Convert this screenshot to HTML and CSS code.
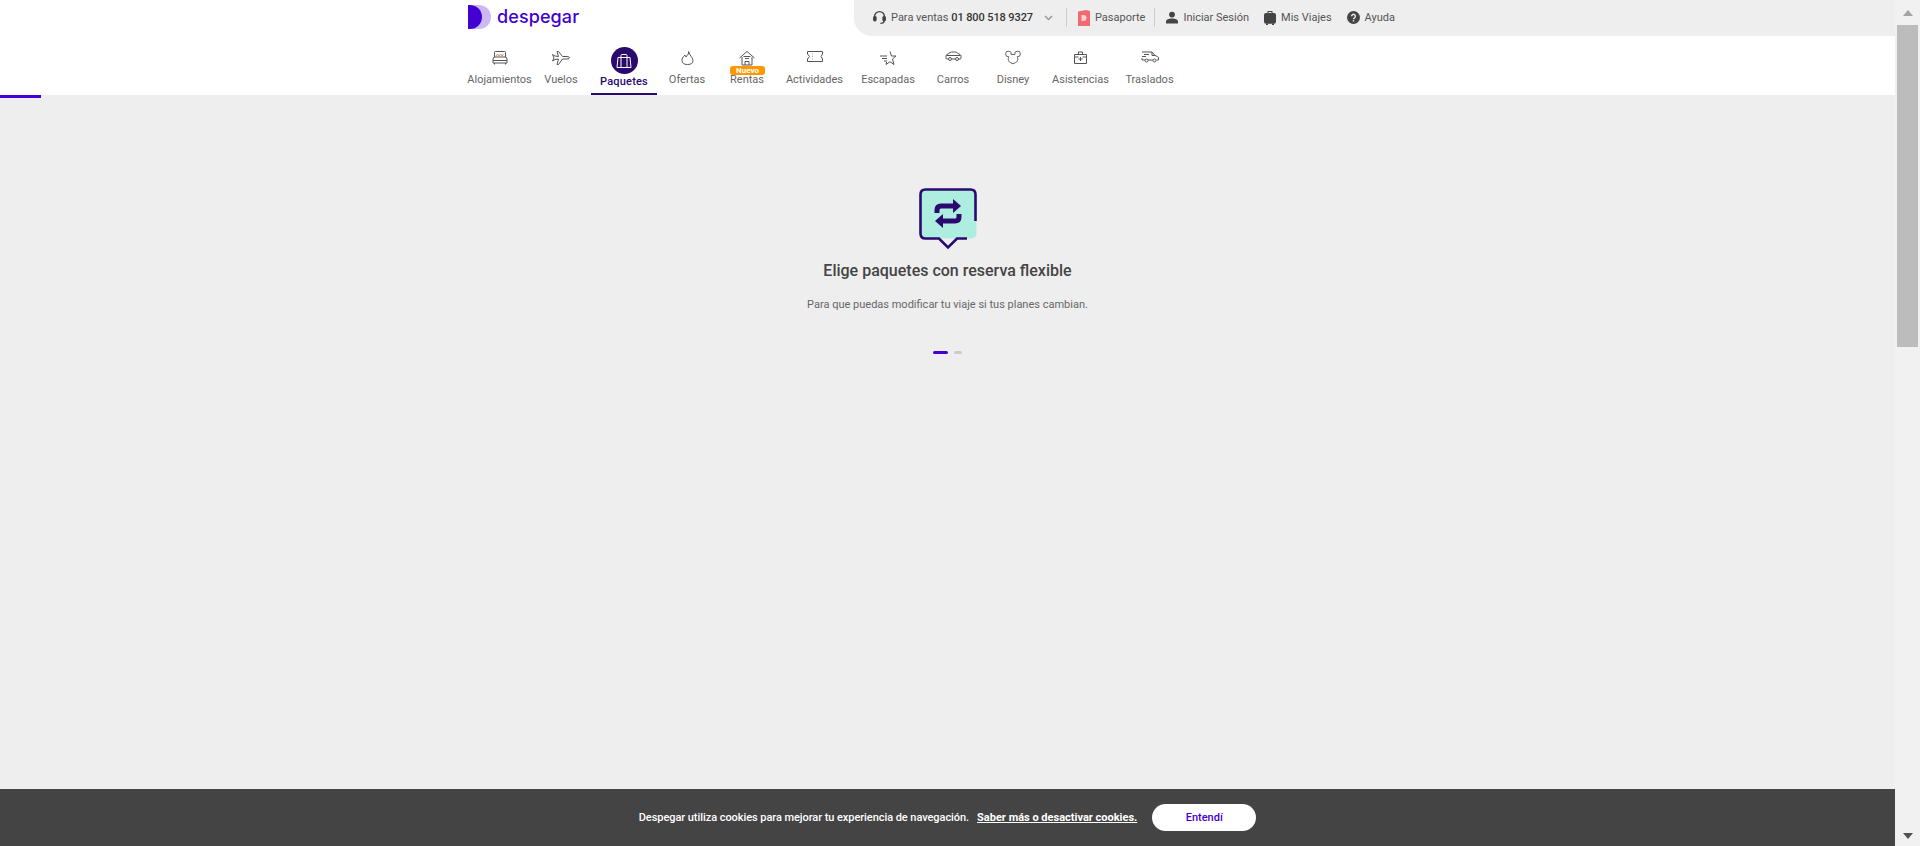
FILE: index.html
```html
<!DOCTYPE html>
<html lang="es">
<head>
    <meta charset="UTF-8">
    <meta name="viewport" content="width=device-width, initial-scale=1.0">
    <title>Despegar | Paquetes</title>
    <link rel="stylesheet" href="styles.css">
</head>
<body>
<div class="page">
    <div class="app">
        <header class="header">
            <div class="header-top">
                <a class="logo" href="#">
                    <svg class="logo-mark" width="23" height="24" viewBox="0 0 23 24">
                        <path d="M0 0h11a12 12 0 0 1 0 24H0z" fill="#cdb8f6"/>
                        <path d="M0 0h2a12 12 0 0 1 0 24H0z" fill="#4300d2"/>
                    </svg>
                    <span class="logo-text">despegar</span>
                </a>
                <nav class="top-links">
                    <a class="top-link" href="#">
                        <svg width="13" height="15" viewBox="0 0 14 15" fill="none" stroke="#444" stroke-width="1.5"><path d="M1.7 8V6.500a5.300 5.300 0 0 1 10.600 0V8"/><rect x="0.8" y="6.500" width="2.400" height="4.500" rx="1" fill="#444"/><rect x="10.800" y="6.500" width="2.400" height="4.500" rx="1" fill="#444"/><path d="M12 11c0 2-1.500 2.800-4 2.800"/></svg>
                        <span>Para ventas <b>01 800 518 9327</b></span>
                    </a>
                    <svg class="chevron" width="9" height="6" viewBox="0 0 9 6" fill="none" stroke="#999" stroke-width="1.500"><path d="M1 1l3.500 3.500L8 1"/></svg>
                    <span class="top-sep sep-first"></span>
                    <a class="top-link" href="#">
                        <svg width="12" height="16" viewBox="0 0 12 16"><path d="M0 1.500L8 0l4 1v15H0z" fill="#f4686f"/><path d="M3.500 5h2a3 3 0 0 1 0 6h-2z" fill="#fbd3d5"/></svg>
                        <span>Pasaporte</span>
                    </a>
                    <span class="top-sep"></span>
                    <a class="top-link" href="#">
                        <svg width="12" height="13" viewBox="0 0 13 13" fill="#444"><circle cx="6.500" cy="3.300" r="3.100"/><path d="M0 13v-2.200C0 8.800 3 7.600 6.500 7.600s6.500 1.200 6.500 3.200V13z"/></svg>
                        <span>Iniciar Sesión</span>
                    </a>
                    <a class="top-link" href="#">
                        <svg width="12" height="15" viewBox="0 0 12 15" fill="#444"><path d="M3.500 3V1h5v2h-1V2h-3v1z"/><rect x="0" y="3" width="12" height="10.800" rx="2"/><rect x="2" y="13.500" width="2" height="1.500"/><rect x="8" y="13.500" width="2" height="1.500"/></svg>
                        <span>Mis Viajes</span>
                    </a>
                    <a class="top-link" href="#">
                        <svg width="13" height="13" viewBox="0 0 13 13"><circle cx="6.500" cy="6.500" r="6.500" fill="#444"/><path d="M4.600 5.200a1.900 1.900 0 1 1 2.900 1.600c-.7.400-1 .8-1 1.500" fill="none" stroke="#eee" stroke-width="1.400"/><rect x="5.800" y="9.200" width="1.400" height="1.400" fill="#eee"/></svg>
                        <span>Ayuda</span>
                    </a>
                </nav>
            </div>
            <nav class="products">
                <a class="product" href="#">
                    <svg class="ico" width="16" height="14" viewBox="0 0 16 14"><path d="M2.500 6V1.500q0-1 1-1h9q1 0 1 1V6M1 12V8q0-2 2-2h10q2 0 2 2v4zM1 9.500h14M2.500 12v1.500M13.500 12v1.500"/><path d="M4 5l1.500-2L7 5l1.500-2L10 5l1.500-2" stroke="#c9945f"/></svg>
                    <span class="label">Alojamientos</span>
                </a>
                <a class="product" href="#">
                    <svg class="ico" width="18" height="14" viewBox="0 0 18 14"><path d="M.5 3.500l2.500 1.500 3.500.5L5 .5h1.500l4 5h4.500q2.500 0 2.500 1.200T15 8H10.500l-4 5.500H5L6.500 8 3 8.500.5 10 2 7z"/></svg>
                    <span class="label">Vuelos</span>
                </a>
                <a class="product active" href="#">
                    <span class="product-badge">
                        <svg class="ico ico-light" width="16" height="14" viewBox="0 0 16 14"><path d="M2 3.500h12l1 10H1zM5 3.500V1.500q0-1 1-1h4q1 0 1 1v2M5 3.500v10M11 3.500v10"/></svg>
                    </span>
                    <span class="label">Paquetes</span>
                </a>
                <a class="product" href="#">
                    <svg class="ico" width="13" height="14" viewBox="0 0 13 14"><path d="M7.500.5c1 2-1 3-2.500 5.500q-1-.5-1-2C1.500 6 1 8 1 9.500q0 4 5.500 4T12 9.500C12 6.500 8.500 4.500 7.500.5z"/></svg>
                    <span class="label">Ofertas</span>
                </a>
                <a class="product" href="#">
                    <svg class="ico" width="16" height="14" viewBox="0 0 16 14"><path d="M.5 7L8 .5 15.500 7M3 6v8h10V6M6 14v-3.500h4V14M4.500 5.500h7M6 7.500h4"/></svg>
                    <span class="tag">Nuevo</span>
                    <span class="label">Rentas</span>
                </a>
                <a class="product" href="#">
                    <svg class="ico" width="16" height="11" viewBox="0 0 16 11"><path d="M.5.5h15v2.500l-1.500 2.500 1.500 2.500v2.500H.5V8L2.500 5.500.5 3z"/><path d="M5.500 3h.5M5.500 5.500h.5M5.500 8h.5"/></svg>
                    <span class="label">Actividades</span>
                </a>
                <a class="product" href="#">
                    <svg class="ico" width="18" height="14" viewBox="0 0 18 14"><path d="M11 .5l1.500 4.500H17l-3.500 3 1.500 5.500-4-2.800-4 2.800.6-2.500M1 5h7M3 7.500h5M5 10h3"/></svg>
                    <span class="label">Escapadas</span>
                </a>
                <a class="product" href="#">
                    <svg class="ico" width="17" height="10" viewBox="0 0 17 10"><path d="M1 7V5q0-1.500 2-2l2-1.500Q6 1 8 1h2q2 0 3 1.500l2 1q1 .5 1 2V7q0 1-1 1h-1.500M3.500 8H2q-1 0-1-1M6.500 8h4M1.500 4.500h14"/><circle cx="5" cy="8" r="1.500"/><circle cx="12" cy="8" r="1.500"/></svg>
                    <span class="label">Carros</span>
                </a>
                <a class="product" href="#">
                    <svg class="ico" width="16" height="14" viewBox="0 0 17 15"><path d="M4 6.100A3 3 0 1 1 6.500 3.900Q8.500 3.400 10.500 3.900A3 3 0 1 1 13 6.100C14.500 9 13 12 11 12.500Q8.500 15 6 12.500C4 12 2.500 9 4 6.100z"/></svg>
                    <span class="label">Disney</span>
                </a>
                <a class="product" href="#">
                    <svg class="ico" width="13" height="13" viewBox="0 0 13 13"><path d="M.5 3.500h12v9H.5zM4.500 3.500V1h4v2.500M.5 6h4M8.500 6h4M6.500 6v4M4.500 8h4"/></svg>
                    <span class="label">Asistencias</span>
                </a>
                <a class="product" href="#">
                    <svg class="ico" width="18" height="12" viewBox="0 0 18 12"><path d="M1 1h10l3 3.500 2.500 1q1 .5 1 1.500v2h-2M4 9H1V7M7 9h5M3 3.500h5M1 5.500h4M11 1v3.500h3"/><circle cx="5.500" cy="9.500" r="1.500"/><circle cx="13.500" cy="9.500" r="1.500"/></svg>
                    <span class="label">Traslados</span>
                </a>
            </nav>
        </header>
        <div class="progress"></div>

        <main class="main">
            <svg class="bubble" width="60" height="62" viewBox="0 0 60 62">
                <rect x="1.500" y="1.500" width="57" height="49" rx="5" fill="#aeeee0"/>
                <path d="M57.500 33V6.500q0-5-5-5H7.500q-5 0-5 5v39q0 5 5 5h13.500l9 9 9-9H49" fill="none" stroke="#2a0a6e" stroke-width="2.600"/>
                <path d="M19 25v-3q0-4 4-4h13" fill="none" stroke="#2a0a6e" stroke-width="5"/>
                <path d="M35 11l8 7-8 7z" fill="#2a0a6e"/>
                <path d="M41 26v3q0 4-4 4H24" fill="none" stroke="#2a0a6e" stroke-width="5"/>
                <path d="M25 26l-8 7 8 7z" fill="#2a0a6e"/>
            </svg>
            <h1 class="slide-title">Elige paquetes con reserva flexible</h1>
            <p class="slide-text">Para que puedas modificar tu viaje si tus planes cambian.</p>
            <div class="dots">
                <span class="dot dot-on"></span>
                <span class="dot"></span>
            </div>
        </main>

        <footer class="cookies">
            <span class="cookies-text">Despegar utiliza cookies para mejorar tu experiencia de navegación.</span>
            <a class="cookies-link" href="#">Saber más o desactivar cookies.</a>
            <button class="cookies-btn" type="button">Entendí</button>
        </footer>
    </div>

    <div class="scrollbar">
        <span class="arrow arrow-up"></span>
        <span class="thumb"></span>
        <span class="arrow arrow-down"></span>
    </div>
</div>
</body>
</html>
```

FILE: styles.css
```css
* {
    box-sizing: border-box;
}
body {
    margin: 0;
    font-family: Roboto, "Open Sans", sans-serif;
    color: #444;
    background-color: #eeeeee;
}
a {
    color: inherit;
    text-decoration: none;
}
.page {
    display: flex;
    height: 100vh;
    overflow: hidden;
}
.app {
    flex: 1;
    min-width: 0;
    display: flex;
    flex-direction: column;
}

/* header */
.header {
    height: 95px;
    background-color: #ffffff;
}
.header-top {
    display: flex;
    height: 36px;
}
.logo {
    display: flex;
    align-items: center;
    gap: 6px;
    margin-left: 468px;
    height: 34px;
}
.logo-text {
    padding-bottom: 2px;
    font-family: Inter, sans-serif;
    font-size: 18px;
    font-weight: 500;
    letter-spacing: 0.1px;
    color: #4300d2;
}
.top-links {
    display: flex;
    align-items: center;
    margin-left: auto;
    width: 1041px;
    padding-left: 19px;
    padding-bottom: 1px;
    background-color: #eeeeee;
    border-bottom-left-radius: 18px;
    font-size: 11px;
    color: #555;
}
.top-link {
    display: flex;
    align-items: center;
    gap: 5px;
    margin-right: 15px;
}
.top-link b {
    font-weight: 500;
    letter-spacing: -0.1px;
    color: #333;
}
.chevron {
    margin-left: -4px;
}
.top-sep {
    width: 1px;
    height: 19px;
    margin-right: 11px;
    margin-left: -6px;
    background-color: #cccccc;
}
.sep-first {
    margin-left: 13px;
}

/* product nav */
.products {
    display: grid;
    grid-template-columns: 63px 60px 66px 60px 60px 75px 72px 58px 62px 73px 65px;
    margin-left: 468px;
    height: 59px;
}
.product {
    position: relative;
    display: flex;
    flex-direction: column;
    align-items: center;
    font-size: 11px;
    color: #666;
}
.ico {
    flex: none;
    overflow: visible;
    margin-top: 15px;
    margin-bottom: auto;
    fill: none;
    stroke: #555;
    stroke-width: 1;
}
.label {
    position: absolute;
    top: 37px;
    white-space: nowrap;
    line-height: 14px;
}
.product-badge {
    display: flex;
    align-items: center;
    justify-content: center;
    width: 27px;
    height: 27px;
    margin-top: 11px;
    border-radius: 50%;
    background-color: #2a0a6e;
}
.ico-light {
    margin: 0;
    stroke: #ffffff;
}
.active {
    border-bottom: 2px solid #2a0a6e;
    color: #2a0a6e;
    font-weight: 500;
}
.active .label {
    top: 39px;
    letter-spacing: 0.2px;
}
.tag {
    position: absolute;
    top: 30px;
    left: 13px;
    width: 35px;
    height: 9px;
    border-radius: 3px;
    background-color: #ff9800;
    color: #ffffff;
    font-size: 8px;
    font-weight: 700;
    line-height: 9px;
    text-align: center;
}
.progress {
    flex: none;
    width: 41px;
    height: 3px;
    background-color: #4300d2;
}

/* slide */
.main {
    flex: 1;
    display: flex;
    flex-direction: column;
    align-items: center;
    padding-top: 90px;
    background-color: #eeeeee;
}
.slide-title {
    margin: 11px 0 0;
    font-size: 16px;
    font-weight: 500;
    line-height: 20px;
    color: #444;
}
.slide-text {
    margin: 16px 0 0;
    font-size: 11px;
    line-height: 16px;
    color: #666;
}
.dots {
    display: flex;
    gap: 6px;
    margin-top: 38px;
}
.dot {
    width: 8px;
    height: 3px;
    border-radius: 2px;
    background-color: #cccccc;
}
.dot-on {
    width: 15px;
    background-color: #4300d2;
}

/* cookie bar */
.cookies {
    display: flex;
    align-items: center;
    justify-content: center;
    height: 57px;
    background-color: #444444;
    color: #ffffff;
    font-size: 11px;
    font-weight: 500;
}
.cookies-text {
    letter-spacing: -0.06px;
}
.cookies-link {
    margin-left: 8px;
    font-weight: 700;
    text-decoration: underline;
}
.cookies-btn {
    width: 104px;
    height: 27px;
    margin-left: 15px;
    border: none;
    border-radius: 14px;
    background-color: #ffffff;
    color: #4300d2;
    font-family: inherit;
    font-size: 11px;
    font-weight: 500;
}

/* fake scrollbar, the screenshot has one */
.scrollbar {
    flex: 0 0 25px;
    display: flex;
    flex-direction: column;
    align-items: center;
    background-color: #f1f1f1;
}
.arrow {
    width: 0;
    height: 0;
    border-left: 5.5px solid transparent;
    border-right: 5.5px solid transparent;
}
.arrow-up {
    margin-top: 10px;
    border-bottom: 6px solid #a3a3a3;
}
.arrow-down {
    margin-top: auto;
    margin-bottom: 7px;
    border-top: 6px solid #505050;
}
.thumb {
    width: 21px;
    height: 322px;
    margin-top: 9px;
    background-color: #bcbcbc;
}
```
